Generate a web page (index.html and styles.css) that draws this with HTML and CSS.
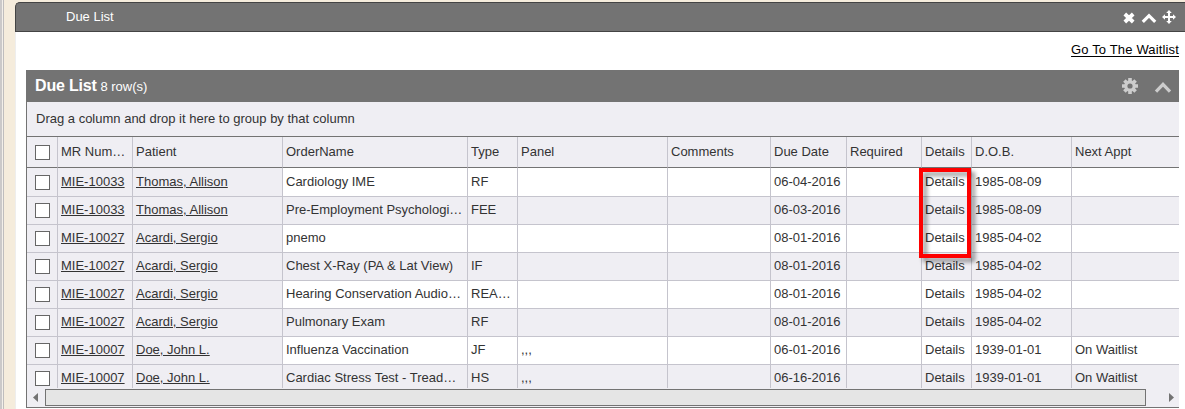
FILE: index.html
```
<!DOCTYPE html>
<html lang="en">
<head>
<meta charset="utf-8">
<title>Due List</title>
<link rel="stylesheet" href="styles.css">
</head>
<body>
<div class="page">
  <section class="portlet">
    <header class="portlet-bar">
      <span class="portlet-title">Due List</span>
      <svg class="ic-close" width="12" height="12" viewBox="0 0 12 12"><path d="M1.8 2L10.2 10M10.2 2L1.8 10" stroke="#fff" stroke-width="3.8" fill="none"/></svg>
      <svg class="ic-up" width="16" height="12" viewBox="0 0 16 12"><path d="M1.8 9.9L8 3.7L14.2 9.9" stroke="#fff" stroke-width="3.2" fill="none"/></svg>
      <svg class="ic-move" width="14" height="14" viewBox="0 0 14 14"><path d="M7 2V12M2 7H12" stroke="#fff" stroke-width="2"/><path d="M7 0L9.8 3H4.2ZM7 14L9.8 11H4.2ZM0 7L3 4.2V9.8ZM14 7L11 4.2V9.8Z" fill="#fff"/></svg>
    </header>
    <div class="portlet-body">
      <div class="wait"><a>Go To The Waitlist</a></div>
      <div class="grid">
        <div class="grid-title">
          <span class="grid-name"><b>Due List</b> 8 row(s)</span>
          <svg class="ic-gear" width="16" height="16" viewBox="0 0 16 16"><g stroke="#ccc" stroke-width="3.6"><path d="M8 0V16M0 8H16M2.4 2.4L13.6 13.6M13.6 2.4L2.4 13.6"/></g><circle cx="8" cy="8" r="5.8" fill="#ccc"/><circle cx="8" cy="8" r="2.6" fill="#737373"/></svg>
          <svg class="ic-up2" width="18" height="14" viewBox="0 0 18 14"><path d="M2 11.7L9 4.4L16 11.7" stroke="#ccc" stroke-width="3.2" fill="none"/></svg>
        </div>
        <div class="group-panel">Drag a column and drop it here to group by that column</div>
        <div class="rows" id="rows"></div>
        <div class="scrollbar">
          <svg class="arrow" width="5" height="9" viewBox="0 0 5 9"><path d="M5 0V9L0 4.5Z" fill="#737373"/></svg>
          <div class="thumb"></div>
          <svg class="arrow" width="5" height="9" viewBox="0 0 5 9"><path d="M0 0V9L5 4.5Z" fill="#737373"/></svg>
        </div>
        <div class="highlight"></div>
      </div>
    </div>
  </section>
</div>
<script src="grid.js"></script>
</body>
</html>
```
FILE: styles.css
```
* { box-sizing: border-box; }
body { margin: 0; background: #f5ecdc; font: 13px/15px "Liberation Sans", Arial, sans-serif; color: #333; }
svg { display: block; flex: none; }
.page { height: 409px; overflow: hidden; padding: 2px 0 0 15px; background: linear-gradient(90deg, #cbc9c9 0 2px, #f3efe9 2px 3px, #bfbdbd 3px 4px, #f5ecdc 4px); }
.portlet-bar { height: 30px; display: flex; align-items: center; background: #737373; border: 1px solid #444; border-right: 0; border-top-left-radius: 5px; padding: 0 9px 0 50px; color: #fff; }
.portlet-title { flex: 1; padding-bottom: 1px; }
.ic-close { margin-right: 6px; margin-top: 1px; }
.ic-up { margin-right: 5px; margin-top: 1px; }
.ic-move { margin-top: 0; }
.portlet-body { height: 377px; background: #fff; border-left: 1px solid #eee; padding: 10px 6px 0 10px; }
.wait { height: 28px; text-align: right; color: #000; letter-spacing: .15px; }
.wait a { text-decoration: underline; text-underline-offset: 2px; }
.grid { position: relative; width: 1153px; height: 338px; border-left: 1px solid #737373; border-bottom: 1px solid #737373; background: #efeef3; }
.grid-title { height: 32px; display: flex; align-items: center; background: #737373; color: #fff; padding: 0 7px 0 8px; }
.grid-name { flex: 1; }
.grid-name b { font-size: 16px; letter-spacing: -.17px; }
.ic-gear { margin-right: 16px; }
.ic-up2 { margin-top: 1px; }
.group-panel { height: 35px; line-height: 33px; padding-left: 9px; border-bottom: 1px solid #737373; }
.rows { height: 251px; overflow: hidden; }
.row { display: grid; grid-template-columns: 31px 75px 150px 185px 50px 150px 103px 76px 75px 50px 100px 107px; height: 28px; line-height: 25px; }
.cell { border-right: 1px solid #c5c4cd; border-bottom: 1px solid #c5c4cd; padding: 0 3px; white-space: nowrap; overflow: hidden; text-overflow: ellipsis; background: #efeef3; }
.cell:last-child { border-right: 0; }
.row.white .cell:nth-child(n+4) { background: #fff; }
.row.head { height: 31px; line-height: 29px; }
.head + .row { height: 29px; line-height: 27px; }
.head .cell { border-bottom-color: #737373; }
.cell.check { padding: 6px 0 0 8px; }
.head + .row .cell.check { padding-top: 7px; }
.head .cell.check { padding-top: 8px; }
.box { width: 15px; height: 15px; border: 1px solid #666; background: #fff; }
.cell a { text-decoration: underline; text-underline-offset: 1px; }
.scrollbar { height: 19px; display: flex; align-items: center; padding: 0 5px 0 6px; }
.thumb { width: 1101px; height: 17px; border: 1px solid #737373; background: #e5e5e5; margin: 0 23px 0 7px; }
.highlight { position: absolute; left: 892px; top: 98px; width: 52px; height: 90px; border: 4px solid #fe0000; filter: drop-shadow(4px 4px 2px rgba(0,0,0,.4)); }
```
FILE: grid.js
```
const head = ["MR Num…", "Patient", "OrderName", "Type", "Panel", "Comments", "Due Date", "Required", "Details", "D.O.B.", "Next Appt"];
const data = [
  ["MIE-10033", "Thomas, Allison", "Cardiology IME", "RF", "", "", "06-04-2016", "", "Details", "1985-08-09", ""],
  ["MIE-10033", "Thomas, Allison", "Pre-Employment Psychologi…", "FEE", "", "", "06-03-2016", "", "Details", "1985-08-09", ""],
  ["MIE-10027", "Acardi, Sergio", "pnemo", "", "", "", "08-01-2016", "", "Details", "1985-04-02", ""],
  ["MIE-10027", "Acardi, Sergio", "Chest X-Ray (PA & Lat View)", "IF", "", "", "08-01-2016", "", "Details", "1985-04-02", ""],
  ["MIE-10027", "Acardi, Sergio", "Hearing Conservation Audio…", "REA…", "", "", "08-01-2016", "", "Details", "1985-04-02", ""],
  ["MIE-10027", "Acardi, Sergio", "Pulmonary Exam", "RF", "", "", "08-01-2016", "", "Details", "1985-04-02", ""],
  ["MIE-10007", "Doe, John L.", "Influenza Vaccination", "JF", ",,,", "", "06-01-2016", "", "Details", "1939-01-01", "On Waitlist"],
  ["MIE-10007", "Doe, John L.", "Cardiac Stress Test - Tread…", "HS", ",,,", "", "06-16-2016", "", "Details", "1939-01-01", "On Waitlist"]
];
const rows = document.getElementById("rows");
function addRow(values, cls, linked) {
  const row = document.createElement("div");
  row.className = "row " + cls;
  const check = document.createElement("div");
  check.className = "cell check";
  check.innerHTML = '<div class="box"></div>';
  row.append(check);
  values.forEach((text, i) => {
    const cell = document.createElement("div");
    cell.className = "cell";
    if (linked && i < 2) {
      const a = document.createElement("a");
      a.textContent = text;
      cell.append(a);
    } else {
      cell.textContent = text;
    }
    row.append(cell);
  });
  rows.append(row);
}
addRow(head, "head", false);
data.forEach((r, i) => addRow(r, i % 2 ? "" : "white", true));
```
